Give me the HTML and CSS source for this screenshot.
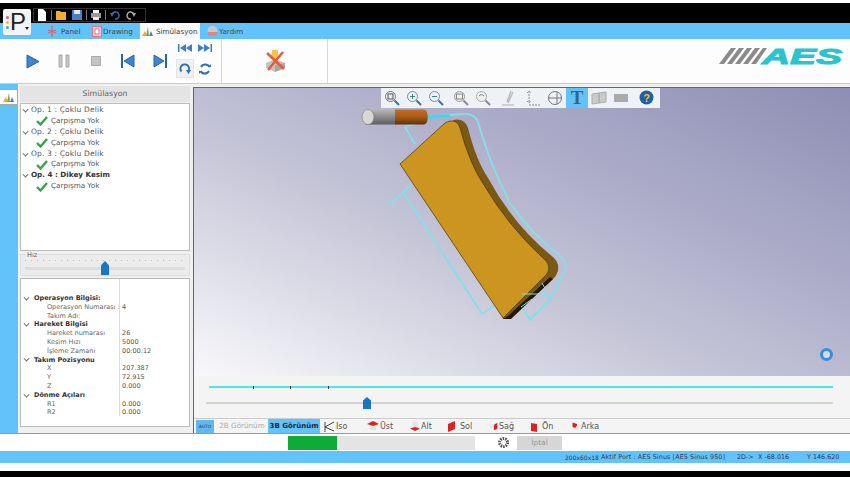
FILE: index.html
```html
<!DOCTYPE html>
<html lang="en">
<head>
    <meta charset="UTF-8">
    <meta name="viewport" content="width=device-width, initial-scale=1.0">
    <title>AES Simülasyon</title>
    <link rel="stylesheet" href="styles.css">
</head>
<body>
    <div class="titlebar">
        <div class="quick-bar">
            <svg width="10" height="12" viewBox="0 0 10 12"><path d="M1 0h5l3 3v9H1z" fill="#fff"/></svg>
            <i class="qsep"></i>
            <svg width="10" height="12" viewBox="0 0 10 12"><path d="M0 2h4l1 1h5v8H0z" fill="#f0b030"/></svg>
            <svg class="after-open" width="10" height="12" viewBox="0 0 10 12"><path d="M0 1h10v10H0z" fill="#4a80c8"/><path d="M2 1h6v4H2z" fill="#dfe8f5"/></svg>
            <i class="qsep"></i>
            <svg width="10" height="12" viewBox="0 0 10 12"><path d="M2 1h6v3H2z" fill="#fff"/><path d="M0 4h10v5H0z" fill="#999"/><path d="M2 8h6v3H2z" fill="#eee"/></svg>
            <i class="qsep"></i>
            <svg width="10" height="12" viewBox="0 0 10 12"><path d="M2 6a3.500 3.500 0 1 1 3 4" fill="none" stroke="#3f6fa8" stroke-width="1.500"/><path d="M0 4h4L2 8z" fill="#3f6fa8"/></svg>
            <svg class="after-open" width="10" height="12" viewBox="0 0 10 12"><path d="M8 6a3.500 3.500 0 1 0-3 4" fill="none" stroke="#aaa" stroke-width="1.500"/><path d="M10 4H6l2 4z" fill="#aaa"/></svg>
        </div>
    </div>

    <div class="app-button">
        <div class="app-dots"><i class="d1"></i><i class="d2"></i><i class="d3"></i></div>
        <span class="app-letter">P</span>
        <i class="app-caret"></i>
    </div>

    <div class="tabs">
        <div class="tab tab-panel"><svg width="11" height="11" viewBox="0 0 11 11"><path d="M5 0v11M1 4l8 3M1 7l8-3" stroke="#e0606a" stroke-width="1.300"/></svg>Panel</div>
        <div class="tab tab-drawing"><svg width="10" height="11" viewBox="0 0 10 11"><path d="M.5.5h9v10h-9z" fill="#fbe" stroke="#d77"/><path d="M3 3h4v5H3z" fill="#fff" stroke="#c88"/></svg>Drawing</div>
        <div class="tab active"><svg width="11" height="11" viewBox="0 0 11 11"><path d="M0 10l3-5 2 5z" fill="#e8b030"/><path d="M4 10l2-9 1 9z" fill="#80a040"/><path d="M7 10l2-5 2 5z" fill="#5080c0"/></svg>Simülasyon</div>
        <div class="tab tab-help"><svg width="11" height="11" viewBox="0 0 11 11"><circle cx="5.500" cy="5" r="5" fill="#c8c8d4"/><path d="M0 6h11l-2 4H2z" fill="#d88"/></svg>Yardım</div>
    </div>

    <div class="ribbon">
        <div class="ribbon-group player">
            <svg width="14" height="15" viewBox="0 0 14 15"><path d="M1 1l12 6.500L1 14z" fill="#3d85d0" stroke="#2a64a8"/></svg>
            <svg width="12" height="14" viewBox="0 0 12 14"><path d="M1 1h3v12H1zM8 1h3v12H8z" fill="#c8c8c8" stroke="#aaa"/></svg>
            <svg class="stop" width="10" height="10" viewBox="0 0 10 10"><path d="M.5.5h9v9h-9z" fill="#c4c4c4" stroke="#aaa"/></svg>
            <svg width="15" height="14" viewBox="0 0 15 14"><path d="M1 0h2v14H1z" fill="#2a64a8"/><path d="M14 1L4 7l10 6z" fill="#3d85d0" stroke="#2a64a8"/></svg>
            <svg width="15" height="14" viewBox="0 0 15 14"><path d="M12 0h2v14h-2z" fill="#2a64a8"/><path d="M1 1l10 6-10 6z" fill="#3d85d0" stroke="#2a64a8"/></svg>
            <div class="mini-buttons">
                <svg width="14" height="8" viewBox="0 0 14 8"><path d="M0 0h1.500v8H0zM14 0v8L8 4zM8 0v8L2 4z" fill="#3d7fc8"/></svg>
                <svg width="14" height="8" viewBox="0 0 14 8"><path d="M12.500 0H14v8h-1.500zM0 0v8l6-4zM6 0v8l6-4z" fill="#3d7fc8"/></svg>
                <div class="mini-loop selected"><svg width="12" height="12" viewBox="0 0 12 12"><path d="M2.500 8.500a4.300 4.300 0 1 1 6.500 0" fill="none" stroke="#2a70b8" stroke-width="2"/><path d="M7 7h5l-2.500 4z" fill="#2a70b8"/></svg></div>
                <div class="mini-loop"><svg width="12" height="12" viewBox="0 0 12 12"><path d="M10.500 4A4.800 4.800 0 0 0 2 4M1.500 8A4.800 4.800 0 0 0 10 8" fill="none" stroke="#2a70b8" stroke-width="2"/><path d="M9 4h3V1zM3 8H0v3z" fill="#2a70b8"/></svg></div>
            </div>
        </div>
        <div class="ribbon-group tool">
            <svg width="24" height="24" viewBox="0 0 24 24">
                <path d="M3 14l9-4 10 4v5l-10 4-9-4z" fill="#c4c4bc"/>
                <path d="M12 16v7l10-4v-5z" fill="#a8a8a0"/>
                <path d="M9 1h6v5h2l-5 6-5-6h2z" fill="#f0c840"/>
                <path d="M4 4l17 16M20 3L5 21" stroke="#e85840" stroke-width="2.500"/>
            </svg>
        </div>
        <div class="ribbon-logo">
            <svg width="126" height="30" viewBox="0 0 126 30">
                <path d="M0 25L12 9h5L5 25zM8 25L20 9h5L13 25zM16 25L28 9h5L21 25zM24 25L36 9h5L29 25zM32 25L44 9h4L37 25z" fill="#8a8a8a"/>
                <text class="logo-text" x="43" y="25" textLength="80" lengthAdjust="spacingAndGlyphs">AES</text>
            </svg>
        </div>
    </div>

    <div class="workspace">
        <div class="side-strip">
            <div class="side-tab"><svg width="13" height="11" viewBox="0 0 11 11"><path d="M0 10l3-5 2 5z" fill="#e8b030"/><path d="M4 10l2-9 1 9z" fill="#80a040"/><path d="M7 10l2-5 2 5z" fill="#5080c0"/></svg></div>
        </div>

        <div class="side-panel">
            <div class="panel-title">Simülasyon</div>
            <div class="op-tree">
                <div class="op-row"><i class="caret"></i>Op. 1 : Çoklu Delik</div>
                <div class="op-row child"><svg class="check" width="12" height="10" viewBox="0 0 12 10"><path d="M1 5l3.500 3.500L11 1" fill="none" stroke="#3aa24a" stroke-width="2.400"/></svg>Çarpışma Yok</div>
                <div class="op-row"><i class="caret"></i>Op. 2 : Çoklu Delik</div>
                <div class="op-row child"><svg class="check" width="12" height="10" viewBox="0 0 12 10"><path d="M1 5l3.500 3.500L11 1" fill="none" stroke="#3aa24a" stroke-width="2.400"/></svg>Çarpışma Yok</div>
                <div class="op-row"><i class="caret"></i>Op. 3 : Çoklu Delik</div>
                <div class="op-row child"><svg class="check" width="12" height="10" viewBox="0 0 12 10"><path d="M1 5l3.500 3.500L11 1" fill="none" stroke="#3aa24a" stroke-width="2.400"/></svg>Çarpışma Yok</div>
                <div class="op-row strong"><i class="caret"></i>Op. 4 : Dikey Kesim</div>
                <div class="op-row child"><svg class="check" width="12" height="10" viewBox="0 0 12 10"><path d="M1 5l3.500 3.500L11 1" fill="none" stroke="#3aa24a" stroke-width="2.400"/></svg>Çarpışma Yok</div>
            </div>

            <div class="speed-box">
                <span class="speed-label">Hız</span>
                <div class="speed-ticks"></div>
                <div class="speed-track"><i class="thumb speed-thumb"></i></div>
            </div>

            <div class="info-table">
                <div class="info-head"><i class="caret"></i>Operasyon Bilgisi:</div><div></div>
                <div class="info-key">Operasyon Numarası :</div><div class="info-val">4</div>
                <div class="info-key">Takım Adı:</div><div></div>
                <div class="info-head"><i class="caret"></i>Hareket Bilgisi</div><div></div>
                <div class="info-key">Hareket numarası</div><div class="info-val">26</div>
                <div class="info-key">Kesim Hızı</div><div class="info-val">5000</div>
                <div class="info-key">İşleme Zamanı</div><div class="info-val">00:00:12</div>
                <div class="info-head"><i class="caret"></i>Takım Pozisyonu</div><div></div>
                <div class="info-key">X</div><div class="info-val">207.387</div>
                <div class="info-key">Y</div><div class="info-val">72.915</div>
                <div class="info-key">Z</div><div class="info-val">0.000</div>
                <div class="info-head"><i class="caret"></i>Dönme Açıları</div><div></div>
                <div class="info-key">R1</div><div class="info-val">0.000</div>
                <div class="info-key">R2</div><div class="info-val">0.000</div>
            </div>
        </div>

        <div class="view-column">
            <div class="viewport">
                <svg class="model" width="657" height="289" viewBox="193 87 657 289">
                    <defs>
                        <linearGradient id="shankFill" x1="0" y1="0" x2="0" y2="1">
                            <stop offset="0" stop-color="#b8b8b8"/><stop offset="1" stop-color="#5c5c5c"/>
                        </linearGradient>
                        <linearGradient id="cutterFill" x1="0" y1="0" x2="0" y2="1">
                            <stop offset="0" stop-color="#c86c2a"/><stop offset=".5" stop-color="#a85a18"/><stop offset="1" stop-color="#5e3210"/>
                        </linearGradient>
                    </defs>
                    <!-- tool path outline around the part -->
                    <g fill="none" stroke="#84e0e8" stroke-width="1.800">
                        <path d="M440 116L461 114C470 113 476 116 478 122Q490 165 510 203Q530 232 558 254Q568 262 565 270L551 299 530 320 522 307"/>
                        <path d="M551 299L540 290M390 204L411 185M403 192L482 314 497 304M405 127L415 144M405 127L417 123"/>
                    </g>
                    <path d="M428 117L450 116" stroke="#30e0e8" stroke-width="3"/>
                    <!-- part: side wall, then top face -->
                    <path d="M453 120C460 118 466 121 468 128Q476 160 488 178Q514 226 553 257C560 263 560 272 553 279L510 319 503 319Z" fill="#7a5a12"/>
                    <path d="M400 164L445 123C452 119 458 121 460 128Q470 165 484 185Q508 226 544 259C550 264 550 270 546 275L503 318Z" fill="#cb951f" stroke="#4a3208" stroke-width=".7"/>
                    <path d="M503 319L511 319 553 279 550 277 508 316Z" fill="#23190a"/>
                    <path d="M522 294L549 294M521 307L532 299M542 283L546 290" stroke="#84e0e8" stroke-width="1"/>
                    <rect x="366" y="109.500" width="30" height="15" fill="url(#shankFill)"/>
                    <path d="M395 109.500H424C429 109.500 429 124.500 424 124.500H395Z" fill="url(#cutterFill)"/>
                    <ellipse cx="368" cy="117" rx="6" ry="7.500" fill="#d8d8d4" stroke="#777" stroke-width=".6"/>
                </svg>

                <div class="view-toolbar">
                    <span class="vt-icon"><svg width="16" height="16" viewBox="0 0 16 16"><circle cx="6.500" cy="6.500" r="5" fill="#eee" stroke="#778"/><rect x="4" y="4" width="5" height="5" fill="none" stroke="#556"/><path d="M10.500 10.500L15 15" stroke="#3a70a8" stroke-width="2"/></svg></span>
                    <span class="vt-icon"><svg width="16" height="16" viewBox="0 0 16 16"><circle cx="6.500" cy="6.500" r="5" fill="#eef" stroke="#88a"/><path d="M4 6.500h5M6.500 4v5" stroke="#3a8a70"/><path d="M10.500 10.500L15 15" stroke="#3a70a8" stroke-width="2"/></svg></span>
                    <span class="vt-icon"><svg width="16" height="16" viewBox="0 0 16 16"><circle cx="6.500" cy="6.500" r="5" fill="#eef" stroke="#88a"/><path d="M4 6.500h5" stroke="#3a8a70"/><path d="M10.500 10.500L15 15" stroke="#3a70a8" stroke-width="2"/></svg></span>
                    <span class="vt-icon wide"><svg width="16" height="16" viewBox="0 0 16 16"><circle cx="6.500" cy="6.500" r="5" fill="#eee" stroke="#999"/><rect x="3.500" y="4" width="6" height="5" fill="none" stroke="#888"/><path d="M10.500 10.500L15 15" stroke="#889" stroke-width="2"/></svg></span>
                    <span class="vt-icon"><svg width="16" height="16" viewBox="0 0 16 16"><circle cx="6.500" cy="6.500" r="5" fill="#eee" stroke="#aaa"/><path d="M4 6a3 3 0 0 1 5 0" fill="none" stroke="#888"/><path d="M10.500 10.500L15 15" stroke="#889" stroke-width="2"/></svg></span>
                    <span class="vt-icon wide"><svg width="16" height="16" viewBox="0 0 16 16"><path d="M11 1L7 12M13 2L8 13" stroke="#bbb" stroke-width="1.500"/><path d="M2 15h12" stroke="#aaa"/></svg></span>
                    <span class="vt-icon wide"><svg width="18" height="16" viewBox="0 0 18 16"><path d="M5 1v12M3 3l2-2 2 2M3 11l2 2 2-2M5 15h12" stroke="#889" stroke-dasharray="2 1" fill="none"/></svg></span>
                    <span class="vt-icon"><svg width="16" height="16" viewBox="0 0 16 16"><circle cx="8" cy="8" r="6.500" fill="none" stroke="#777"/><path d="M1 8h14M10 2v12" stroke="#777"/></svg></span>
                    <span class="vt-icon on"><span class="vt-letter">T</span></span>
                    <span class="vt-icon"><svg width="16" height="14" viewBox="0 0 16 14"><path d="M1 3l14-2v10L1 13z" fill="#c8ccc8" stroke="#aaa"/><path d="M8 2v10" stroke="#999"/></svg></span>
                    <span class="vt-icon"><svg width="16" height="12" viewBox="0 0 16 12"><path d="M1 2h14v8H1z" fill="#aaa"/></svg></span>
                    <span class="vt-icon wide"><svg width="15" height="15" viewBox="0 0 15 15"><circle cx="7.500" cy="7.500" r="7" fill="#1f5fa8"/><text x="7.500" y="11.500" class="help-mark">?</text></svg></span>
                </div>

                <i class="busy-ring"></i>
            </div>

            <div class="timeline">
                <div class="time-line"><i class="tick t1"></i><i class="tick t2"></i><i class="tick t3"></i></div>
                <div class="time-track"><i class="thumb time-thumb"></i></div>
            </div>

            <div class="view-bar">
                <span class="auto-btn">AUTO</span>
                <span class="view-tab muted">2B Görünüm</span>
                <span class="view-tab current">3B Görünüm</span>
                <span class="view-item iso"><svg width="12" height="12" viewBox="0 0 12 12"><path d="M2 12V2M2 7l9-5M2 7l9 4" fill="none" stroke="#444"/></svg>Iso</span>
                <span class="view-item ust"><svg width="12" height="11" viewBox="0 0 12 11"><path d="M0 3l6-3 6 3-6 2z" fill="#e02020"/><path d="M3 5l3 1 3-1v4H3z" fill="#e4e4e4"/></svg>Üst</span>
                <span class="view-item alt"><svg width="10" height="11" viewBox="0 0 12 11"><path d="M3 0h6v6H3z" fill="#e4e4e4"/><path d="M0 8l6-2 6 2-6 3z" fill="#e02020"/></svg>Alt</span>
                <span class="view-item sol"><svg width="10" height="11" viewBox="0 0 10 11"><path d="M1 3l7-3v8l-7 3z" fill="#e02020"/></svg>Sol</span>
                <span class="view-item sag"><svg width="8" height="11" viewBox="0 0 12 11"><path d="M0 2h6v6H0z" fill="#e8e8e8"/><path d="M6 3l5-3v9l-5 2z" fill="#e02020"/></svg>Sağ</span>
                <span class="view-item on-view"><svg width="10" height="11" viewBox="0 0 10 11"><path d="M1 2l6 1v8l-6-1z" fill="#e02020"/></svg>Ön</span>
                <span class="view-item arka"><svg width="9" height="11" viewBox="0 0 12 11"><path d="M2 0l6 2v6L2 6z" fill="#e02020"/><path d="M8 4h3v6H5V8z" fill="#e8e8e8"/></svg>Arka</span>
            </div>
        </div>
    </div>

    <div class="progress-row">
        <div class="progress"><div class="progress-fill"></div></div>
        <svg class="gear" width="13" height="13" viewBox="0 0 13 13"><circle cx="6.500" cy="6.500" r="4" fill="none" stroke="#555" stroke-width="3" stroke-dasharray="1.500 1"/></svg>
        <div class="cancel-btn">İptal</div>
    </div>

    <div class="status-bar">
        <span class="st-size">200x60x18</span>
        <span class="st-port">Aktif Port : AES Sinus [AES Sinus 950]</span>
        <span class="st-mode">2D-&gt;</span>
        <span class="st-x">X -68.016</span>
        <span class="st-y">Y 146.620</span>
    </div>
    <div class="foot-white"></div>
    <div class="foot-black"></div>
</body>
</html>
```

FILE: styles.css
```css
* {
    box-sizing: border-box;
}
html, body {
    margin: 0;
    padding: 0;
}
body {
    position: relative;
    width: 850px;
    height: 477px;
    overflow: hidden;
    display: flex;
    flex-direction: column;
    background-color: #fff;
    color: #555;
    font-family: "DejaVu Sans", sans-serif;
    font-size: 7.5px;
}

/* top black bar */
.titlebar {
    height: 20px;
    margin-top: 3px;
    flex: none;
    background-color: #000;
    padding: 5px 0 0 33px;
}
.quick-bar {
    width: 113px;
    height: 14px;
    display: flex;
    align-items: center;
    gap: 4px;
    padding-left: 3px;
    border: 1px solid #333;
}
.quick-bar .after-open {
    margin-left: 2px;
}
.qsep {
    width: 1px;
    height: 10px;
    background-color: #777;
}
.app-button {
    position: absolute;
    left: 3px;
    top: 9px;
    width: 28px;
    height: 26px;
    background-color: #f4f4f4;
    border-radius: 2px;
    display: flex;
    align-items: center;
    padding-left: 3px;
}
.app-dots {
    display: flex;
    flex-direction: column;
    gap: 2px;
    margin-right: 1px;
}
.app-dots i {
    width: 3px;
    height: 3px;
    border-radius: 50%;
}
.d1 { background-color: #e84a8a; }
.d2 { background-color: #f0c030; }
.d3 { background-color: #30b0d0; }
.app-letter {
    font-family: "Liberation Sans", sans-serif;
    font-size: 24px;
    line-height: 24px;
    color: #222;
}
.app-caret {
    position: absolute;
    right: 2px;
    bottom: 3px;
    border: 2px solid transparent;
    border-top: 3px solid #222;
}

/* ribbon tabs */
.tabs {
    height: 16px;
    flex: none;
    display: flex;
    background-color: #62c3fa;
    padding-left: 42px;
    color: #444;
    font-size: 7.200px;
}
.tab {
    display: flex;
    align-items: center;
    white-space: nowrap;
}
.tab-panel {
    width: 46px;
    padding-left: 5px;
    gap: 3px;
}
.tab-drawing {
    width: 52px;
    padding-left: 4px;
    gap: 1px;
}
.tab.active {
    width: 60px;
    padding-left: 2px;
    gap: 3px;
    background-color: #f7f9fb;
}
.tab-help {
    padding-left: 7px;
    gap: 1px;
}

/* ribbon body */
.ribbon {
    height: 45px;
    flex: none;
    display: flex;
    background-color: #fdfdfd;
    border-bottom: 1px solid #ccc;
}
.ribbon-group {
    border-right: 1px solid #d8d8d8;
    display: flex;
    align-items: center;
}
.player {
    width: 222px;
    padding-left: 26px;
    gap: 18px;
}
.player .stop {
    margin: 0 1px 0 3px;
}
.mini-buttons {
    display: grid;
    grid-template-columns: 20px 20px;
    justify-items: center;
    align-items: center;
    row-gap: 7px;
    margin-left: -11px;
}
.mini-loop {
    width: 18px;
    height: 19px;
    display: flex;
    align-items: center;
    justify-content: center;
}
.mini-loop.selected {
    background-color: #f0f0f0;
    border: 1px solid #e4e4e4;
}
.tool {
    width: 106px;
    justify-content: center;
}
.ribbon-logo {
    flex: 1;
    display: flex;
    justify-content: flex-end;
    align-items: flex-start;
    padding: 0 5px 0 0;
}
.logo-text {
    font-family: "Liberation Sans", sans-serif;
    font-weight: bold;
    font-style: italic;
    font-size: 22px;
    fill: #29c4cc;
    stroke: #29c4cc;
    stroke-width: 1px;
}

/* main area */
.workspace {
    height: 349px;
    flex: none;
    display: flex;
    background-color: #f0f0f0;
}
.side-strip {
    width: 18px;
    flex: none;
    background-color: #62c3fa;
    padding-top: 5px;
}
.side-tab {
    height: 16px;
    background-color: #fff;
    border: 1px solid #aaa;
    border-left: 0;
    display: flex;
    align-items: center;
    justify-content: center;
}
.side-panel {
    width: 172px;
    flex: none;
    padding: 2px 0 0 2px;
    display: flex;
    flex-direction: column;
}
.panel-title {
    height: 16px;
    background-color: #e4e4e4;
    text-align: center;
    line-height: 15px;
    font-size: 7.800px;
    color: #666;
}
.op-tree {
    height: 148px;
    margin-top: 1px;
    background-color: #fff;
    border: 1px solid #bbb;
    padding-top: 1px;
}
.op-row {
    height: 10.900px;
    line-height: 10.900px;
    display: flex;
    align-items: center;
    white-space: nowrap;
    color: #555;
    letter-spacing: .15px;
}
.op-row.strong {
    font-weight: bold;
    font-size: 7.200px;
    color: #333;
    letter-spacing: 0;
}
.op-row.child {
    padding-left: 15px;
    font-size: 7.200px;
    letter-spacing: 0;
}
.check {
    margin-right: 3px;
}
.caret {
    width: 5px;
    height: 5px;
    flex: none;
    margin: 0 3px 2px 2px;
    border-right: 1.300px solid #555;
    border-bottom: 1.300px solid #555;
    transform: rotate(45deg) scale(.85);
}
.speed-box {
    position: relative;
    height: 22px;
    margin-top: 3px;
    background-color: #ececec;
    border: 1px solid #ddd;
}
.speed-label {
    position: absolute;
    left: 5px;
    top: -4px;
    font-size: 6.500px;
    background-color: #f0f0f0;
    color: #555;
    padding: 0 1px;
}
.speed-ticks {
    height: 1px;
    margin: 5px 4px 0;
    background-image: repeating-linear-gradient(90deg, #bbb 0, #bbb 1px, transparent 1px, transparent 6px);
}
.speed-track {
    position: relative;
    height: 3px;
    margin: 6px 4px 0;
    background-color: #dcdcdc;
}
.thumb {
    position: absolute;
    width: 8px;
    background-color: #1c74c4;
    clip-path: polygon(50% 0, 100% 30%, 100% 100%, 0 100%, 0 30%);
}
.speed-thumb {
    left: 76px;
    top: -6px;
    height: 14px;
}
.info-table {
    height: 149px;
    margin-top: 2px;
    background-color: #fff;
    border: 1px solid #bbb;
    padding: 15px 0 0 0;
    display: grid;
    grid-template-columns: 98px 1fr;
    grid-auto-rows: 8.800px;
    line-height: 8.800px;
    font-size: 6.500px;
    background-image: linear-gradient(#ddd, #ddd);
    background-size: 1px 137px;
    background-position: 98px 0;
    background-repeat: no-repeat;
    white-space: nowrap;
}
.info-head {
    display: flex;
    align-items: center;
    font-weight: bold;
    color: #333;
    padding-left: 1px;
}
.info-head .caret {
    margin-right: 5px;
}
.info-key {
    padding-left: 26px;
    color: #666;
}
.info-val {
    padding-left: 3px;
    color: #555;
}

/* 3D view */
.view-column {
    flex: 1;
    min-width: 0;
    margin: 3px 0 0 3px;
    display: flex;
    flex-direction: column;
    border-left: 1px solid #666;
    border-top: 1px solid #666;
}
.viewport {
    position: relative;
    height: 288px;
    flex: none;
    overflow: hidden;
    background: linear-gradient(205deg, #8e8eb4 0%, #adadca 35%, #c6c6d8 60%, #f8f8fb 100%);
}
.model {
    position: absolute;
    left: -1px;
    top: -1px;
}
.view-toolbar {
    position: absolute;
    left: 187px;
    top: -1px;
    height: 21px;
    width: 279px;
    display: flex;
    align-items: center;
    background-color: #eef1f6;
}
.vt-icon {
    width: 22px;
    height: 20px;
    flex: none;
    display: flex;
    align-items: center;
    justify-content: center;
}
.vt-icon.wide {
    margin-left: 3px;
}
.vt-icon.on {
    background-color: #62c3fa;
}
.vt-letter {
    font-family: "Liberation Serif", serif;
    font-weight: bold;
    font-size: 19px;
    color: #3c6478;
}
.help-mark {
    font-family: "Liberation Sans", sans-serif;
    font-size: 11px;
    font-weight: bold;
    fill: #f0c030;
    text-anchor: middle;
}
.busy-ring {
    position: absolute;
    left: 626px;
    top: 260px;
    width: 13px;
    height: 13px;
    border-radius: 50%;
    border: 3px solid #3a8ed8;
    background-color: #cfdcec;
}
.timeline {
    height: 42px;
    flex: none;
    background-color: #f4f4f5;
    padding: 10px 17px 0 12px;
}
.time-line {
    position: relative;
    height: 2px;
    margin-left: 3px;
    background-color: #50e4f0;
}
.tick {
    position: absolute;
    width: 1px;
    height: 3px;
    top: 0;
    background-color: #333;
}
.t1 { left: 44px; }
.t2 { left: 81px; }
.t3 { left: 119px; }
.time-track {
    position: relative;
    height: 2px;
    margin-top: 14px;
    background-color: #d4d4d4;
}
.time-thumb {
    left: 157px;
    top: -5px;
    height: 12px;
}
.view-bar {
    height: 15px;
    flex: none;
    display: flex;
    align-items: center;
    background-color: #f4f4f4;
    border-top: 1px solid #ccc;
    padding-left: 2px;
    font-size: 8px;
    white-space: nowrap;
    color: #555;
}
.auto-btn {
    width: 18px;
    height: 13px;
    line-height: 13px;
    text-align: center;
    font-size: 4.500px;
    background-color: #62b8f0;
    color: #333;
    margin-right: 4px;
}
.view-tab {
    width: 48px;
    text-align: center;
    line-height: 14px;
    font-size: 7.200px;
}
.view-tab.muted {
    color: #aaa;
}
.view-tab.current {
    width: 52px;
    margin-left: 2px;
    margin-right: 3px;
    background-color: #62c3fa;
    color: #223;
    font-weight: bold;
    font-size: 7px;
}
.view-item {
    display: flex;
    align-items: center;
    gap: 1px;
}
.iso { width: 44px; }
.ust { width: 43px; }
.alt { width: 37px; }
.sol { width: 43px; gap: 3px; }
.sag { width: 40px; }
.on-view { width: 41px; gap: 2px; }

/* bottom rows */
.progress-row {
    height: 18px;
    flex: none;
    display: flex;
    align-items: center;
    padding-left: 288px;
    background-color: #fff;
    border-top: 1px solid #999;
}
.progress {
    width: 187px;
    height: 14px;
    background-color: #e4e4e4;
}
.progress-fill {
    width: 49px;
    height: 100%;
    background-color: #0dab3a;
}
.gear {
    margin: 0 7px 0 22px;
}
.cancel-btn {
    width: 45px;
    height: 14px;
    line-height: 14px;
    text-align: center;
    background-color: #d6d6d6;
    color: #999;
}
.status-bar {
    height: 12px;
    flex: none;
    display: flex;
    align-items: center;
    background-color: #62c3fa;
    padding-left: 565px;
    font-size: 6.400px;
    color: #335;
    white-space: nowrap;
}
.st-size {
    width: 36px;
    font-size: 6px;
}
.st-port {
    width: 136px;
    letter-spacing: .1px;
}
.st-mode { width: 21px; }
.st-x { width: 49px; }
.foot-white {
    height: 8px;
    flex: none;
    background-color: #fff;
}
.foot-black {
    flex: 1;
    background-color: #000;
}
```
